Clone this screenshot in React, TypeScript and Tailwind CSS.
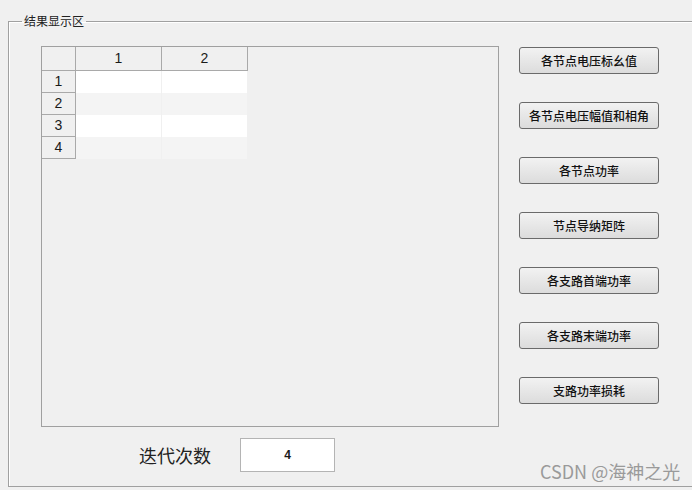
const buttons = [
  "各节点电压标幺值",
  "各节点电压幅值和相角",
  "各节点功率",
  "节点导纳矩阵",
  "各支路首端功率",
  "各支路末端功率",
  "支路功率损耗",
];

const rows = [1, 2, 3, 4];

const App = () => {
  return (
    <main
      className="relative w-[692px] h-[490px] overflow-hidden bg-[#f0f0f0] pl-[8px] pt-[13px] text-[#1a1a1a]"
      style={{ fontFamily: '"Noto Sans CJK SC", "Liberation Sans", sans-serif' }}
    >
      <fieldset className="w-[720px] h-[474px] border border-[#a0a0a0] shadow-[inset_1px_1px_0_#ffffff]">
        <legend className="ml-[13px] px-[2px] text-[12px] leading-[16px] text-[#222]">结果显示区</legend>

        <div className="flex pt-[17px]">
          <div className="flex flex-col ml-[32px]">
            {/* table */}
            <div className="w-[458px] h-[381px] border border-[#a0a0a0] bg-[#f0f0f0]">
              <div className="flex h-[24px] text-[14px] leading-[23px] font-['Liberation_Sans']">
                <div className="w-[34px] border-r border-b border-[#a9a9a9]"></div>
                <div className="w-[86px] border-r border-b border-[#a9a9a9] text-center">1</div>
                <div className="w-[86px] border-r border-b border-[#a9a9a9] text-center">2</div>
              </div>
              {rows.map((r) => (
                <div key={r} className="flex h-[22px] text-[14px] leading-[21px] font-['Liberation_Sans']">
                  <div className="w-[34px] border-r border-b border-[#a9a9a9] text-center">{r}</div>
                  <div className={`w-[86px] border-r border-[#f0f0f0] ${r % 2 ? "bg-white" : "bg-[#f4f4f4]"}`}></div>
                  <div className={`w-[85px] ${r % 2 ? "bg-white" : "bg-[#f4f4f4]"}`}></div>
                </div>
              ))}
            </div>

            <div className="flex items-center mt-[11px]">
              <span className="ml-[98px] w-[73px] text-[18px] leading-[24px] text-[#222]">迭代次数</span>
              <div className="ml-[28px] w-[95px] h-[34px] border border-[#b4b4b4] bg-white flex items-center justify-center text-[12px] font-semibold font-['Liberation_Sans']">
                4
              </div>
            </div>
          </div>

          <div className="flex flex-col gap-[28px] ml-[20px] pt-[1px]">
            {buttons.map((b) => (
              <button
                key={b}
                className="w-[140px] h-[27px] rounded-[3px] border border-[#6a6a6a] bg-gradient-to-b from-[#f2f2f2] to-[#dcdcdc] text-[12px] leading-[25px] font-medium text-[#111] whitespace-nowrap"
              >
                {b}
              </button>
            ))}
          </div>
        </div>
      </fieldset>

      <span className="absolute left-[540px] top-[459px] text-[18px] leading-[24px] text-[#9a9a9a]">CSDN @海神之光</span>
    </main>
  );
};

export default App;
